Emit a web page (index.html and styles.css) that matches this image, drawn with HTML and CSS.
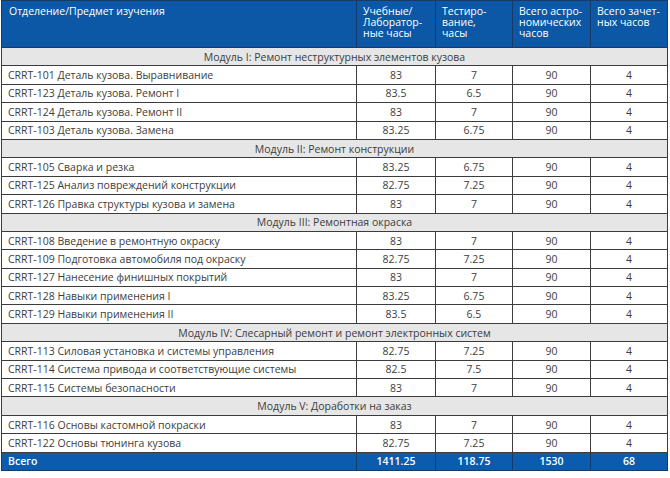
FILE: index.html
```html
<!DOCTYPE html>
<html lang="ru">
<head>
<meta charset="utf-8">
<link rel="stylesheet" href="styles.css">
</head>
<body>
<table class="plan">
  <colgroup>
    <col class="c-name"><col class="c-num"><col class="c-num2"><col class="c-num3"><col class="c-num2">
  </colgroup>
  <thead>
    <tr class="head">
      <th>Отделение/Предмет изучения</th>
      <th>Учебные/<br>Лаборатор-<br>ные часы</th>
      <th>Тестиро-<br>вание,<br>часы</th>
      <th>Всего астро-<br>номических<br>часов</th>
      <th>Всего зачет-<br>ных часов</th>
    </tr>
  </thead>
  <tbody>
    <tr class="module"><td colspan="5">Модуль I: Ремонт неструктурных элементов кузова</td></tr>
    <tr><td>CRRT-101 Деталь кузова. Выравнивание</td><td>83</td><td>7</td><td>90</td><td>4</td></tr>
    <tr><td>CRRT-123 Деталь кузова. Ремонт I</td><td>83.5</td><td>6.5</td><td>90</td><td>4</td></tr>
    <tr><td>CRRT-124 Деталь кузова. Ремонт II</td><td>83</td><td>7</td><td>90</td><td>4</td></tr>
    <tr><td>CRRT-103 Деталь кузова. Замена</td><td>83.25</td><td>6.75</td><td>90</td><td>4</td></tr>
    <tr class="module"><td colspan="5">Модуль II: Ремонт конструкции</td></tr>
    <tr><td>CRRT-105 Сварка и резка</td><td>83.25</td><td>6.75</td><td>90</td><td>4</td></tr>
    <tr><td>CRRT-125 Анализ повреждений конструкции</td><td>82.75</td><td>7.25</td><td>90</td><td>4</td></tr>
    <tr><td>CRRT-126 Правка структуры кузова и замена</td><td>83</td><td>7</td><td>90</td><td>4</td></tr>
    <tr class="module"><td colspan="5">Модуль III: Ремонтная окраска</td></tr>
    <tr><td>CRRT-108 Введение в ремонтную окраску</td><td>83</td><td>7</td><td>90</td><td>4</td></tr>
    <tr><td>CRRT-109 Подготовка автомобиля под окраску</td><td>82.75</td><td>7.25</td><td>90</td><td>4</td></tr>
    <tr><td>CRRT-127 Нанесение финишных покрытий</td><td>83</td><td>7</td><td>90</td><td>4</td></tr>
    <tr><td>CRRT-128 Навыки применения I</td><td>83.25</td><td>6.75</td><td>90</td><td>4</td></tr>
    <tr><td>CRRT-129 Навыки применения II</td><td>83.5</td><td>6.5</td><td>90</td><td>4</td></tr>
    <tr class="module"><td colspan="5">Модуль IV: Слесарный ремонт и ремонт электронных систем</td></tr>
    <tr><td>CRRT-113 Силовая установка и системы управления</td><td>82.75</td><td>7.25</td><td>90</td><td>4</td></tr>
    <tr><td>CRRT-114 Система привода и соответствующие системы</td><td>82.5</td><td>7.5</td><td>90</td><td>4</td></tr>
    <tr><td>CRRT-115 Системы безопасности</td><td>83</td><td>7</td><td>90</td><td>4</td></tr>
    <tr class="module"><td colspan="5">Модуль V: Доработки на заказ</td></tr>
    <tr><td>CRRT-116 Основы кастомной покраски</td><td>83</td><td>7</td><td>90</td><td>4</td></tr>
    <tr><td>CRRT-122 Основы тюнинга кузова</td><td>82.75</td><td>7.25</td><td>90</td><td>4</td></tr>
    <tr class="total"><td>Всего</td><td>1411.25</td><td>118.75</td><td>1530</td><td>68</td></tr>
  </tbody>
</table>
</body>
</html>
```
FILE: styles.css
```css
html, body {
  margin: 0;
  padding: 0;
  background: #ffffff;
}

body {
  font-family: "Open Sans", "Liberation Sans", sans-serif;
  font-size: 10.5px;
  color: #3d3d3d;
}

.plan {
  border-collapse: collapse;
  width: 666px;
  margin-left: 1px;
  table-layout: fixed;
}

.c-name { width: 355px; }
.c-num { width: 79px; }
.c-num2 { width: 77px; }
.c-num3 { width: 78px; }

.plan td, .plan th {
  border: 1px solid #3c3c3c;
  padding: 0 6px;
  height: 17.4px;
  line-height: 12px;
  white-space: nowrap;
  overflow: hidden;
}

.head th {
  background: #0c58a6;
  color: #ffffff;
  font-weight: 400;
  text-align: left;
  vertical-align: top;
  height: 47px;
  padding-top: 5px;
  padding-bottom: 0;
  line-height: 11px;
  border-color: #1a3a66;
  box-sizing: border-box;
}

.head th:first-child {
  padding-left: 7px;
}

.plan tbody td {
  text-align: center;
}

.plan tbody td:first-child {
  text-align: left;
  padding-left: 6px;
}

.module td {
  background: #e6e6e6;
  text-align: center !important;
}

.total td {
  background: #0b5cae;
  color: #ffffff;
  font-weight: 600;
  border-color: #1a3a66;
}
```
